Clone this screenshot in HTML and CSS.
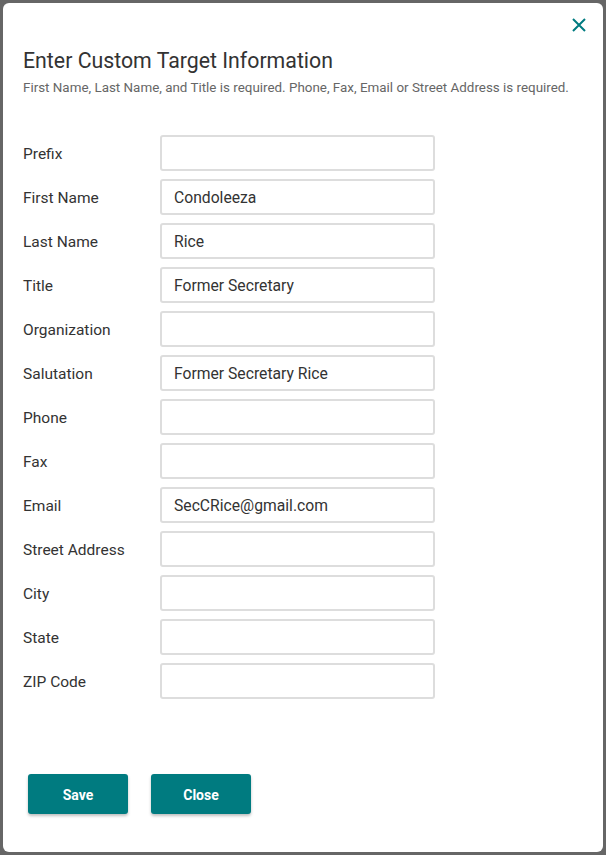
FILE: index.html
```html
<!DOCTYPE html>
<html lang="en">
<head>
  <meta charset="UTF-8">
  <meta name="viewport" content="width=device-width, initial-scale=1.0">
  <title>Enter Custom Target Information</title>
  <link rel="stylesheet" href="styles.css">
</head>
<body>
  <div class="modal">
    <button class="close-x" aria-label="Close">
      <svg width="14" height="14" viewBox="0 0 14 14"><path d="M1 1L13 13M13 1L1 13" stroke="#007b80" stroke-width="2" fill="none"/></svg>
    </button>

    <h1>Enter Custom Target Information</h1>
    <p class="instructions">First Name, Last Name, and Title is required. Phone, Fax, Email or Street Address is required.</p>

    <form class="target-form">
      <label for="prefix">Prefix</label>
      <input id="prefix" type="text" value="">
      <label for="first">First Name</label>
      <input id="first" type="text" value="Condoleeza">
      <label for="last">Last Name</label>
      <input id="last" type="text" value="Rice">
      <label for="title">Title</label>
      <input id="title" type="text" value="Former Secretary">
      <label for="org">Organization</label>
      <input id="org" type="text" value="">
      <label for="salutation">Salutation</label>
      <input id="salutation" type="text" value="Former Secretary Rice">
      <label for="phone">Phone</label>
      <input id="phone" type="text" value="">
      <label for="fax">Fax</label>
      <input id="fax" type="text" value="">
      <label for="email">Email</label>
      <input id="email" type="text" value="SecCRice@gmail.com">
      <label for="street">Street Address</label>
      <input id="street" type="text" value="">
      <label for="city">City</label>
      <input id="city" type="text" value="">
      <label for="state">State</label>
      <input id="state" type="text" value="">
      <label for="zip">ZIP Code</label>
      <input id="zip" type="text" value="">
    </form>

    <div class="actions">
      <button class="btn">Save</button>
      <button class="btn">Close</button>
    </div>
  </div>
</body>
</html>
```
FILE: styles.css
```css
body {
  font-family: Roboto, "Liberation Sans", sans-serif;
  margin: 0;
  padding: 3px;
  background-color: #666;
}
.modal {
  position: relative;
  box-sizing: border-box;
  background: #fff;
  width: 600px;
  height: 849px;
  border-radius: 6px;
  padding: 45px 20px 0 20px;
}
.close-x {
  position: absolute;
  top: 15px;
  right: 17px;
  background: none;
  border: none;
  padding: 0;
  cursor: pointer;
  line-height: 0;
}
h1 {
  font-size: 21.3px;
  font-weight: 400;
  line-height: 26px;
  color: #333;
  margin: 0;
}
.instructions {
  font-size: 13.4px;
  line-height: 18px;
  color: #666;
  margin: 5px 0 0 0;
}
.target-form {
  display: grid;
  grid-template-columns: 137px 275px;
  row-gap: 8px;
  margin-top: 38px;
  align-items: center;
}
.target-form label {
  font-size: 15.5px;
  color: #333;
  padding-top: 2px;
}
.target-form input {
  box-sizing: border-box;
  height: 36px;
  width: 275px;
  border: 2px solid #ddd;
  border-radius: 3px;
  padding: 0 12px;
  font-family: inherit;
  font-size: 15.7px;
  color: #333;
  outline: none;
}
.actions {
  display: flex;
  gap: 23px;
  margin-top: 75px;
  padding-left: 5px;
}
.btn {
  width: 100px;
  height: 40px;
  background-color: #007b80;
  color: #fff;
  border: none;
  border-radius: 3px;
  font-family: inherit;
  font-size: 14px;
  font-weight: 700;
  padding-top: 2px;
  box-shadow: 0 2px 3px rgba(0, 0, 0, 0.25);
  cursor: pointer;
}
```
